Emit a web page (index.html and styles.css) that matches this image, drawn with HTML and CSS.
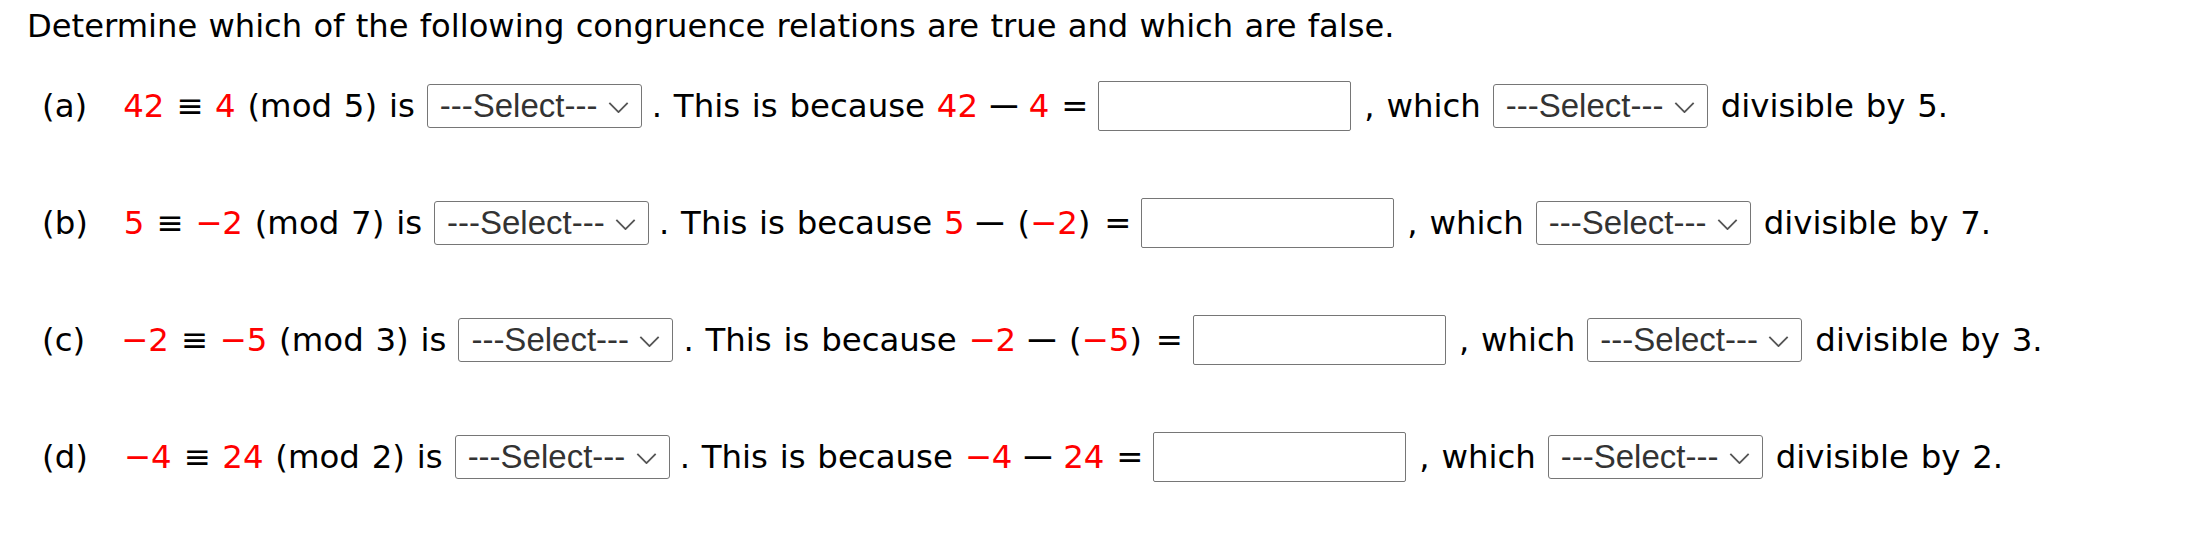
FILE: index.html
```html
<!DOCTYPE html>
<html>
<head>
<meta charset="utf-8">
<link rel="stylesheet" href="styles.css">
</head>
<body>
<div class="page">
  <p class="intro">Determine which of the following congruence relations are true and which are false.</p>

  <div class="row">
    <span class="label">(a)</span>
    <span class="txt"><span class="v">42</span> ≡ <span class="v">4</span> (mod 5) is</span>
    <span class="sel"><select class="choice"><option>---Select---</option></select><svg class="chev" viewBox="0 0 22 12"><path d="M1 1 L11 11 L21 1"/></svg></span>
    <span class="txt">. This is because <span class="v">42</span> <span class="op">−</span> <span class="v">4</span> =</span>
    <input class="ans" type="text">
    <span class="txt">, which</span>
    <span class="sel sel-2"><select class="choice"><option>---Select---</option></select><svg class="chev" viewBox="0 0 22 12"><path d="M1 1 L11 11 L21 1"/></svg></span>
    <span class="txt">divisible by 5.</span>
  </div>

  <div class="row">
    <span class="label">(b)</span>
    <span class="txt"><span class="v">5</span> ≡ <span class="v">−2</span> (mod 7) is</span>
    <span class="sel"><select class="choice"><option>---Select---</option></select><svg class="chev" viewBox="0 0 22 12"><path d="M1 1 L11 11 L21 1"/></svg></span>
    <span class="txt">. This is because <span class="v">5</span> <span class="op">−</span> <span class="grp">(<span class="v">−2</span>)</span> =</span>
    <input class="ans" type="text">
    <span class="txt">, which</span>
    <span class="sel sel-2"><select class="choice"><option>---Select---</option></select><svg class="chev" viewBox="0 0 22 12"><path d="M1 1 L11 11 L21 1"/></svg></span>
    <span class="txt">divisible by 7.</span>
  </div>

  <div class="row">
    <span class="label">(c)</span>
    <span class="txt"><span class="v">−2</span> ≡ <span class="v">−5</span> (mod 3) is</span>
    <span class="sel"><select class="choice"><option>---Select---</option></select><svg class="chev" viewBox="0 0 22 12"><path d="M1 1 L11 11 L21 1"/></svg></span>
    <span class="txt">. This is because <span class="v">−2</span> <span class="op">−</span> <span class="grp">(<span class="v">−5</span>)</span> =</span>
    <input class="ans" type="text">
    <span class="txt">, which</span>
    <span class="sel sel-2"><select class="choice"><option>---Select---</option></select><svg class="chev" viewBox="0 0 22 12"><path d="M1 1 L11 11 L21 1"/></svg></span>
    <span class="txt">divisible by 3.</span>
  </div>

  <div class="row">
    <span class="label">(d)</span>
    <span class="txt"><span class="v">−4</span> ≡ <span class="v">24</span> (mod 2) is</span>
    <span class="sel"><select class="choice"><option>---Select---</option></select><svg class="chev" viewBox="0 0 22 12"><path d="M1 1 L11 11 L21 1"/></svg></span>
    <span class="txt">. This is because <span class="v">−4</span> <span class="op">−</span> <span class="v">24</span> =</span>
    <input class="ans" type="text">
    <span class="txt">, which</span>
    <span class="sel sel-2"><select class="choice"><option>---Select---</option></select><svg class="chev" viewBox="0 0 22 12"><path d="M1 1 L11 11 L21 1"/></svg></span>
    <span class="txt">divisible by 2.</span>
  </div>
</div>
</body>
</html>
```

FILE: styles.css
```css
html, body {
  margin: 0;
  padding: 0;
  background: #ffffff;
}

.page {
  padding: 6px 0 0 27px;
  font-family: "DejaVu Sans", Verdana, sans-serif;
  color: #000000;
}

.intro {
  margin: 0;
  font-size: 32.2px;
  word-spacing: 1px;
  line-height: 40px;
  white-space: nowrap;
}

.row {
  display: flex;
  align-items: center;
  height: 117px;
  padding-left: 15px;
  font-size: 32.4px;
  word-spacing: 1.5px;
  white-space: nowrap;
}

.intro + .row {
  margin-top: 1px;
}

.label {
  margin-right: 36px;
}

.v {
  color: #ff0000;
}

.op {
  display: inline-block;
  transform: scaleX(1.3);
}

.grp {
  padding: 0 2px;
}

.sel {
  position: relative;
  display: inline-flex;
  margin: 0 10px 0 12px;
}

.sel-2 {
  margin: 0 13px 0 12px;
}

.choice {
  appearance: none;
  -webkit-appearance: none;
  width: 215px;
  height: 44px;
  box-sizing: border-box;
  margin: 0;
  padding: 0 0 0 12px;
  border: 1px solid #767676;
  border-radius: 3px;
  background: #ffffff;
  font-family: "Liberation Sans", Arial, sans-serif;
  font-size: 33px;
  word-spacing: 0;
  color: #333333;
}

.chev {
  position: absolute;
  right: 13px;
  top: 18px;
  width: 21px;
  height: 11px;
  fill: none;
  stroke: #555555;
  stroke-width: 2;
  pointer-events: none;
}

.ans {
  width: 253px;
  height: 50px;
  box-sizing: border-box;
  margin: 0 13px 0 10px;
  padding: 0;
  border: 1px solid #767676;
  border-radius: 2px;
  background: #ffffff;
}
```
